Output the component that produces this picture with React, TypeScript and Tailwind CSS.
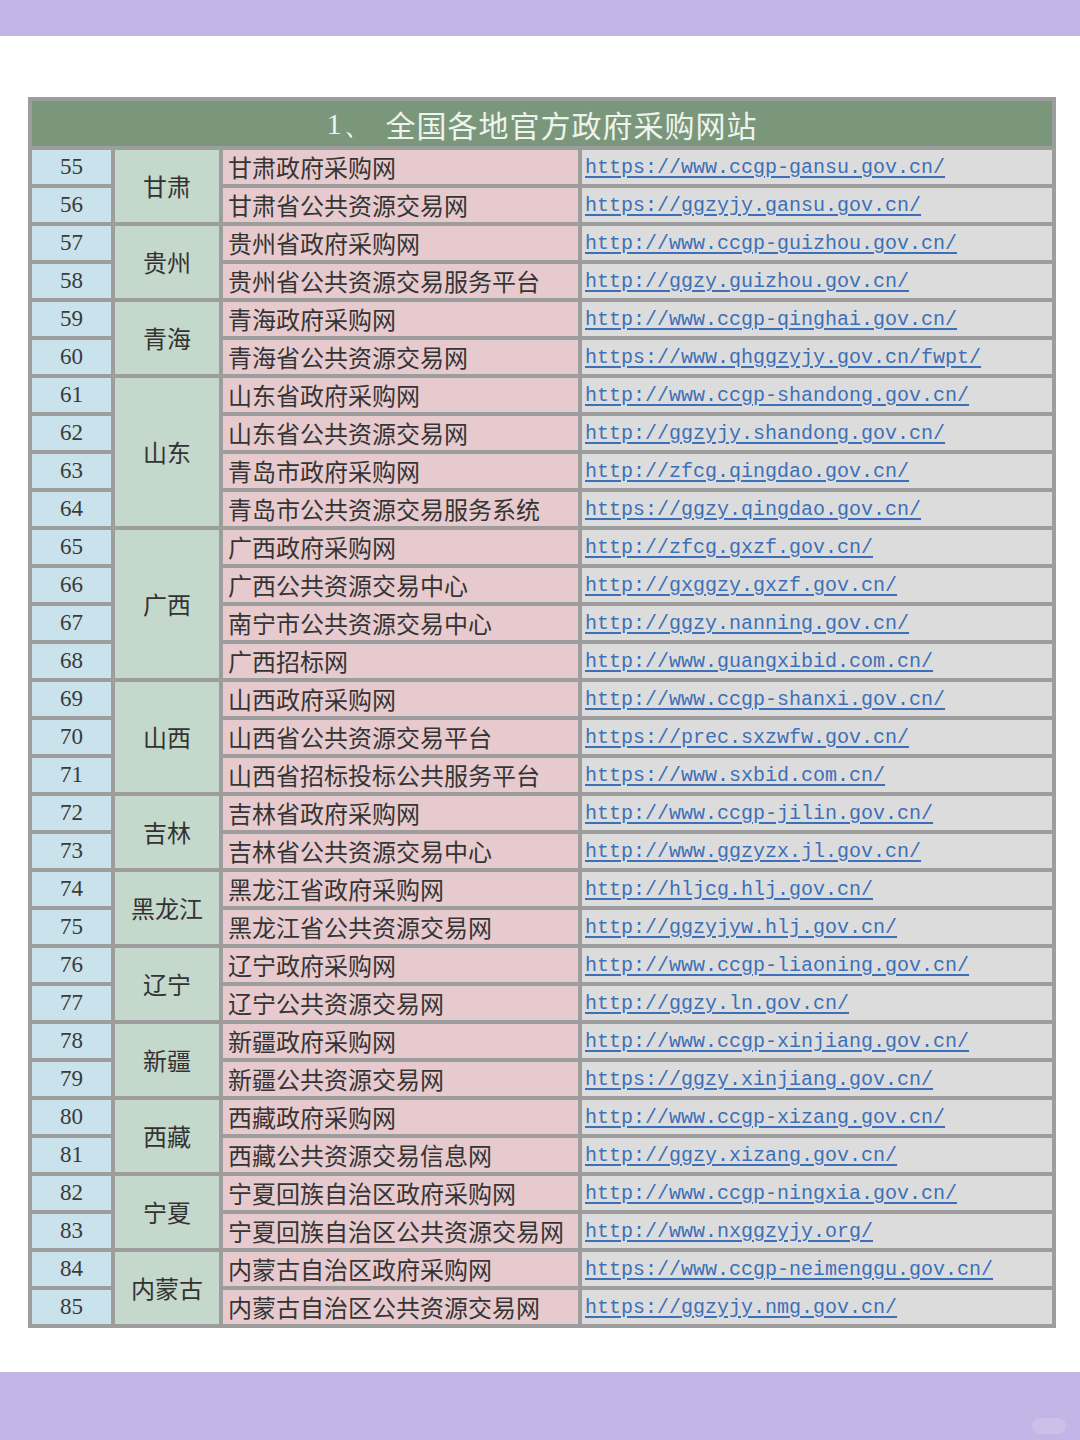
import React from "react";

type Site = { name: string; url: string };
type Group = { province: string; start: number; sites: Site[] };

const groups: Group[] = [
  {
    province: "甘肃",
    start: 55,
    sites: [
      { name: "甘肃政府采购网", url: "https://www.ccgp-gansu.gov.cn/" },
      { name: "甘肃省公共资源交易网", url: "https://ggzyjy.gansu.gov.cn/" },
    ],
  },
  {
    province: "贵州",
    start: 57,
    sites: [
      { name: "贵州省政府采购网", url: "http://www.ccgp-guizhou.gov.cn/" },
      { name: "贵州省公共资源交易服务平台", url: "http://ggzy.guizhou.gov.cn/" },
    ],
  },
  {
    province: "青海",
    start: 59,
    sites: [
      { name: "青海政府采购网", url: "http://www.ccgp-qinghai.gov.cn/" },
      { name: "青海省公共资源交易网", url: "https://www.qhggzyjy.gov.cn/fwpt/" },
    ],
  },
  {
    province: "山东",
    start: 61,
    sites: [
      { name: "山东省政府采购网", url: "http://www.ccgp-shandong.gov.cn/" },
      { name: "山东省公共资源交易网", url: "http://ggzyjy.shandong.gov.cn/" },
      { name: "青岛市政府采购网", url: "http://zfcg.qingdao.gov.cn/" },
      { name: "青岛市公共资源交易服务系统", url: "https://ggzy.qingdao.gov.cn/" },
    ],
  },
  {
    province: "广西",
    start: 65,
    sites: [
      { name: "广西政府采购网", url: "http://zfcg.gxzf.gov.cn/" },
      { name: "广西公共资源交易中心", url: "http://gxggzy.gxzf.gov.cn/" },
      { name: "南宁市公共资源交易中心", url: "http://ggzy.nanning.gov.cn/" },
      { name: "广西招标网", url: "http://www.guangxibid.com.cn/" },
    ],
  },
  {
    province: "山西",
    start: 69,
    sites: [
      { name: "山西政府采购网", url: "http://www.ccgp-shanxi.gov.cn/" },
      { name: "山西省公共资源交易平台", url: "https://prec.sxzwfw.gov.cn/" },
      { name: "山西省招标投标公共服务平台", url: "https://www.sxbid.com.cn/" },
    ],
  },
  {
    province: "吉林",
    start: 72,
    sites: [
      { name: "吉林省政府采购网", url: "http://www.ccgp-jilin.gov.cn/" },
      { name: "吉林省公共资源交易中心", url: "http://www.ggzyzx.jl.gov.cn/" },
    ],
  },
  {
    province: "黑龙江",
    start: 74,
    sites: [
      { name: "黑龙江省政府采购网", url: "http://hljcg.hlj.gov.cn/" },
      { name: "黑龙江省公共资源交易网", url: "http://ggzyjyw.hlj.gov.cn/" },
    ],
  },
  {
    province: "辽宁",
    start: 76,
    sites: [
      { name: "辽宁政府采购网", url: "http://www.ccgp-liaoning.gov.cn/" },
      { name: "辽宁公共资源交易网", url: "http://ggzy.ln.gov.cn/" },
    ],
  },
  {
    province: "新疆",
    start: 78,
    sites: [
      { name: "新疆政府采购网", url: "http://www.ccgp-xinjiang.gov.cn/" },
      { name: "新疆公共资源交易网", url: "https://ggzy.xinjiang.gov.cn/" },
    ],
  },
  {
    province: "西藏",
    start: 80,
    sites: [
      { name: "西藏政府采购网", url: "http://www.ccgp-xizang.gov.cn/" },
      { name: "西藏公共资源交易信息网", url: "http://ggzy.xizang.gov.cn/" },
    ],
  },
  {
    province: "宁夏",
    start: 82,
    sites: [
      { name: "宁夏回族自治区政府采购网", url: "http://www.ccgp-ningxia.gov.cn/" },
      { name: "宁夏回族自治区公共资源交易网", url: "http://www.nxggzyjy.org/" },
    ],
  },
  {
    province: "内蒙古",
    start: 84,
    sites: [
      { name: "内蒙古自治区政府采购网", url: "https://www.ccgp-neimenggu.gov.cn/" },
      { name: "内蒙古自治区公共资源交易网", url: "https://ggzyjy.nmg.gov.cn/" },
    ],
  },
];

const cjk = "font-['Noto_Sans_CJK_SC',sans-serif]";

function GroupRows({ group }: { group: Group }) {
  return (
    <div className="flex gap-[4px]">
      {/* index numbers */}
      <div className="flex w-[79px] flex-col gap-[4px]">
        {group.sites.map((_, i) => (
          <div
            key={i}
            className="flex h-[34px] items-center justify-center bg-[#c9e2eb] font-['Liberation_Serif',serif] text-[23px] text-[#3a3a3a]"
          >
            {group.start + i}
          </div>
        ))}
      </div>

      {/* province, spans the group */}
      <div
        className={`flex w-[104px] items-center justify-center bg-[#c5d8cc] text-[24px] text-[#333] ${cjk}`}
      >
        {group.province}
      </div>

      {/* site names */}
      <div className="flex w-[355px] flex-col gap-[4px]">
        {group.sites.map((s) => (
          <div
            key={s.name}
            className={`flex h-[34px] items-center whitespace-nowrap bg-[#e7cacd] pl-[5px] text-[24px] leading-none text-[#353535] ${cjk}`}
          >
            {s.name}
          </div>
        ))}
      </div>

      {/* links */}
      <div className="flex w-[470px] flex-col gap-[4px]">
        {group.sites.map((s) => (
          <div key={s.url} className="flex h-[34px] items-center bg-[#dcdcdc] pt-[2px] pl-[3px]">
            <a
              href={s.url}
              className="whitespace-nowrap font-['Liberation_Mono',monospace] text-[20px] leading-none text-[#3c70b8] underline decoration-[1.5px] underline-offset-[3px]"
            >
              {s.url}
            </a>
          </div>
        ))}
      </div>
    </div>
  );
}

export default function App() {
  return (
    <div className="flex min-h-[1440px] w-[1080px] flex-col bg-white">
      <div className="h-[36px] bg-[#c3b5e6]" />

      <div className="flex flex-1 pt-[61px] pl-[28px]">
        <div className="flex h-fit w-[1028px] flex-col gap-[4px] bg-[#9d9d9d] p-[4px]">
          <div
            className={`flex h-[45px] items-center justify-center bg-[#7a977b] text-[30px] leading-none tracking-[1px] text-[#eef3ee] ${cjk}`}
          >
            <span className="font-['Liberation_Serif',serif]">1、</span>
            <span className="ml-[12px]">全国各地官方政府采购网站</span>
          </div>
          {groups.map((g) => (
            <GroupRows key={g.province} group={g} />
          ))}
        </div>
      </div>

      <div className="relative h-[68px] bg-[#c3b5e6]">
        <div className="absolute right-[14px] bottom-[6px] h-[16px] w-[34px] rounded-full bg-white/15" />
      </div>
    </div>
  );
}
